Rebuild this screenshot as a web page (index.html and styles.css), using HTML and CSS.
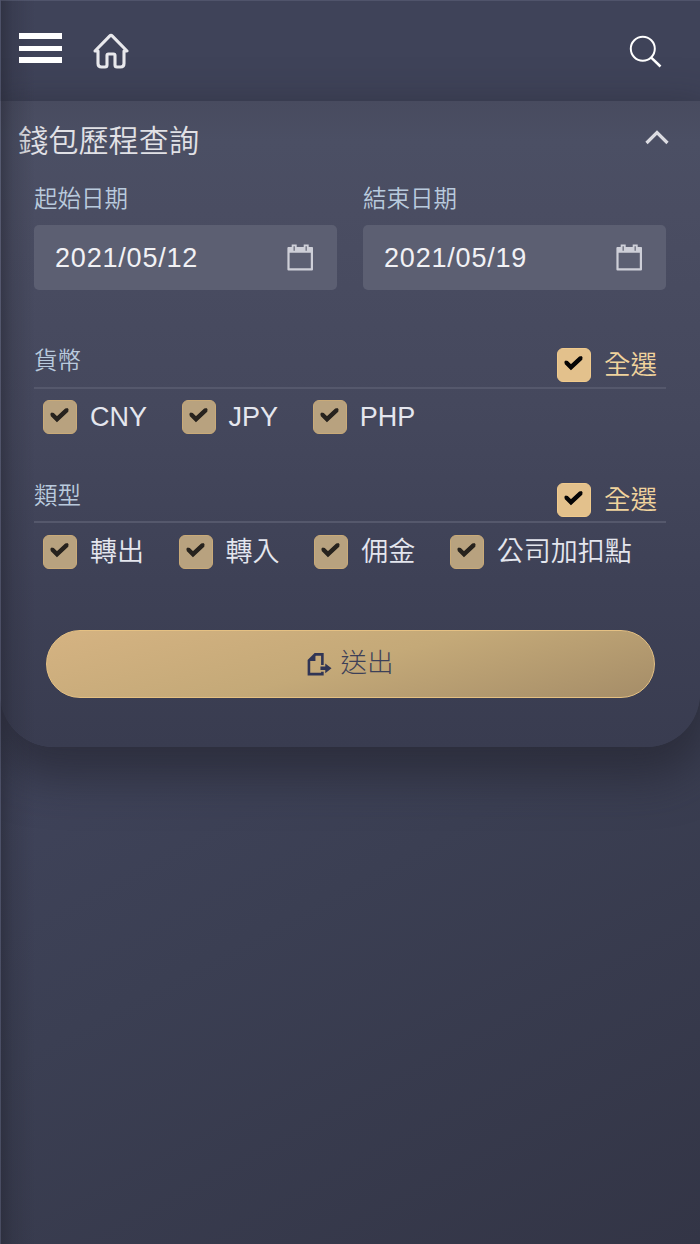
FILE: index.html
```html
<!DOCTYPE html>
<html lang="zh-Hant">
<head>
<meta charset="utf-8">
<title>錢包歷程查詢</title>
<link rel="stylesheet" href="styles.css">
</head>
<body>
<svg class="defs" width="0" height="0">
  <symbol id="check" viewBox="0 0 34 34"><path d="M9 14.200 14 19.200 24 9.800" fill="none" stroke="currentColor" stroke-width="4.400"/><path d="M9 14.200 14 19.200 24 9.800" fill="none" stroke="currentColor" stroke-width="3.200" stroke-linecap="round"/></symbol>
  <symbol id="calendar" viewBox="0 0 27 27"><path d="M1.500 4h23.400v21.400H1.500z" fill="none" stroke="currentColor" stroke-width="2.200" stroke-linejoin="round"/><path d="M1 3h24.400v5.800H1zM4.700 .5h5v7h-5zM16.700 .5h5v7h-5z" fill="currentColor"/><path d="M7.200 2.300v4.400M19.200 2.300v4.400" stroke="#777988" stroke-width="1.500"/></symbol>
</svg>
<div class="app">
  <header class="topbar">
    <button class="menu" aria-label="選單"><span></span><span></span><span></span></button>
    <svg class="home" viewBox="0 0 36 36" fill="none" stroke="currentColor" stroke-width="3.100" stroke-linejoin="round" stroke-linecap="round"><path d="M5 18H2L16.600 3.100q1.400-1.400 2.800 0L34 18h-3v12.500q0 3.500-3.500 3.500H24q-2 0-2-2v-9.500q0-1.500-1.500-1.500h-5q-1.500 0-1.500 1.500V32q0 2-2 2H8.500Q5 34 5 30.500z"/></svg>
    <svg class="search" viewBox="0 0 34 34" fill="none" stroke="currentColor" stroke-width="2"><circle cx="13.800" cy="13.800" r="12"/><path d="M22 22.300 31.500 31.500" stroke-width="2.500"/></svg>
  </header>
  <main class="panel">
    <div class="panel-head">
      <h1>錢包歷程查詢</h1>
      <svg class="chevron" viewBox="0 0 24 16"><path d="M1.500 14 12 3.500 22.500 14" fill="none" stroke="currentColor" stroke-width="3.200"/></svg>
    </div>
    <div class="dates">
      <div class="field"><label>起始日期</label><div class="date"><span>2021/05/12</span><svg><use href="#calendar"/></svg></div></div>
      <div class="field"><label>結束日期</label><div class="date"><span>2021/05/19</span><svg><use href="#calendar"/></svg></div></div>
    </div>
    <section class="group">
      <div class="group-head"><h2>貨幣</h2><div class="option all"><i class="box"><svg><use href="#check"/></svg></i><span>全選</span></div></div>
      <div class="options">
        <div class="option"><i class="box"><svg><use href="#check"/></svg></i><span>CNY</span></div>
        <div class="option"><i class="box"><svg><use href="#check"/></svg></i><span>JPY</span></div>
        <div class="option"><i class="box"><svg><use href="#check"/></svg></i><span>PHP</span></div>
      </div>
    </section>
    <section class="group">
      <div class="group-head"><h2>類型</h2><div class="option all"><i class="box"><svg><use href="#check"/></svg></i><span>全選</span></div></div>
      <div class="options">
        <div class="option"><i class="box"><svg><use href="#check"/></svg></i><span>轉出</span></div>
        <div class="option"><i class="box"><svg><use href="#check"/></svg></i><span>轉入</span></div>
        <div class="option"><i class="box"><svg><use href="#check"/></svg></i><span>佣金</span></div>
        <div class="option"><i class="box"><svg><use href="#check"/></svg></i><span>公司加扣點</span></div>
      </div>
    </section>
    <button class="submit">
      <svg viewBox="0 0 26 25"><path d="M16 13V2H8.500L2 8.500v14h14v-2.500" fill="none" stroke="currentColor" stroke-width="2.700"/><path d="M8.800 1v7.800H1z" fill="currentColor"/><path d="M14 14.700h5v-3.200l6.500 5-6.500 5v-3.300h-5z" fill="currentColor"/></svg>
      <span>送出</span>
    </button>
  </main>
</div>
</body>
</html>
```
FILE: styles.css
```css
* { box-sizing: border-box; }
body {
  margin: 0;
  font-family: "Liberation Sans", "Noto Sans CJK TC", sans-serif;
  font-weight: 350;
  color: #e4e6ee;
}
h1, h2 { margin: 0; font-weight: 350; }
button { font: inherit; color: inherit; border: 0; background: none; padding: 0; }
.defs { display: none; }
.app {
  position: relative;
  height: 1244px;
  overflow: hidden;
  background: linear-gradient(152deg, #43465d 0%, #40445b 45%, #3b3f53 66%, #333546 100%);
}
/* Soft shade along the left edge of the screen */
.app::after {
  content: "";
  position: absolute;
  inset: 0;
  pointer-events: none;
  border-top: 1px solid rgba(120, 125, 150, .3);
  border-left: 1px solid rgba(120, 125, 150, .25);
  background: linear-gradient(90deg, rgba(35, 36, 48, .5), rgba(35, 36, 48, .2) 12px, transparent 34px);
}
.topbar {
  display: flex;
  align-items: flex-start;
  height: 101px;
  padding: 33px 37px 0 19px;
  background: #3f4359;
}
.menu {
  position: relative;
  z-index: 1;
  display: flex;
  flex-direction: column;
  justify-content: space-between;
  width: 43px;
  height: 30px;
}
.menu span { width: 100%; height: 6px; background: #fff; }
.menu span:nth-child(2) { height: 5px; }
.home { width: 36px; height: 36px; margin-left: 31px; color: #e8e8ec; }
.search { width: 34px; height: 34px; margin: 2px 0 0 auto; color: #fff; }
.panel {
  height: 646px;
  padding: 19px 34px 0;
  border-radius: 0 0 54px 54px;
  background: linear-gradient(180deg, #484b5f 0, #4b4f64 40px, #4a4d62 110px, #45485d 300px, #3e4156 480px, #393c50 100%);
  box-shadow: 0 20px 45px 10px rgba(32, 32, 43, .58);
}
.panel-head {
  display: flex;
  justify-content: space-between;
  align-items: flex-start;
  height: 61px;
  margin: 0 -3px 0 -16px;
}
h1 { font-size: 30.200px; line-height: 44px; color: #e1e1e6; }
.chevron { width: 24px; height: 16px; margin-top: 9px; color: #dcdce2; }
.dates { display: flex; gap: 26px; height: 158px; }
.field { flex: 1; }
.field label, h2 { display: block; font-size: 23.500px; line-height: 36px; color: #b9cadd; }
.date {
  display: flex;
  align-items: center;
  justify-content: space-between;
  height: 65px;
  margin-top: 8px;
  padding: 1px 23px 0 21px;
  border-radius: 5px;
  background: #5c5f72;
  font-size: 27px;
  letter-spacing: .8px;
  color: #f1f1f5;
}
.date svg { width: 27px; height: 27px; margin-bottom: 2px; color: #cecfd8; }
.group { height: 135px; }
.group-head {
  display: flex;
  justify-content: space-between;
  height: 50px;
  border-bottom: 2px solid #55586c;
}
.group + .group .group-head { height: 49px; }
.group + .group .options { padding-top: 12px; }
h2 { margin-top: 4px; }
.option { display: flex; align-items: center; gap: 13px; height: 34px; font-size: 27px; color: #e4e6ee; }
.option span { line-height: 34px; white-space: nowrap; }
.box {
  width: 34px;
  height: 34px;
  border: 1px solid #c9aa78;
  border-radius: 6px;
  background: #b8a27f;
  color: #27231e;
}
.box svg { display: block; width: 34px; height: 34px; margin: -1px; }
.all { margin: 9px 9px 0 0; color: #f0d39d; font-size: 26.500px; }
.all .box { background: #e3c18c; border-color: #f0ca8c; color: #050505; }
.options { display: flex; gap: 34.600px; padding: 11px 0 0 9px; }
.submit {
  display: flex;
  align-items: center;
  justify-content: center;
  gap: 9px;
  width: 609px;
  height: 68px;
  margin: 21px 0 0 12px;
  border: 1.500px solid #e4c083;
  border-radius: 34px;
  background: linear-gradient(165deg, #d5b382 0%, #c4a978 50%, #a58d68 100%);
  color: #3d4058;
  font-size: 26.500px;
  font-weight: 300;
}
.submit svg { width: 25px; height: 25px; color: #303555; }
.submit span { line-height: 32px; margin: -2px 1px 0 0; }
```
